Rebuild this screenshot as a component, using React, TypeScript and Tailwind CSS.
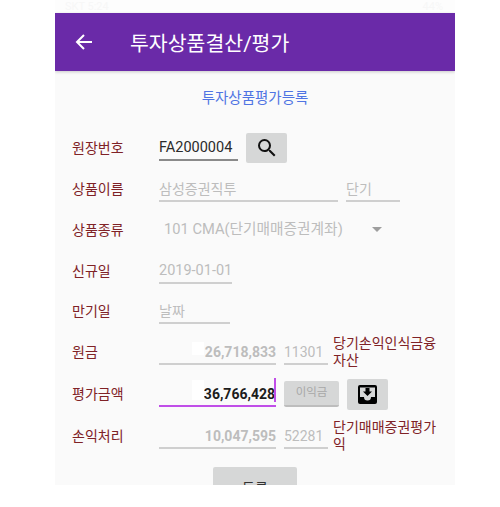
import React from 'react';

const FONT = 'font-["Roboto","Noto_Sans_CJK_KR",sans-serif]';

const Label = ({ children }: { children: React.ReactNode }) => (
  <span className="w-[87px] shrink-0 text-[14px] leading-[20px] text-[#7f2226]">{children}</span>
);

const Field = ({
  text,
  width,
  right,
  bold,
  patch,
  className,
}: {
  text: string;
  width: string;
  right?: boolean;
  bold?: boolean;
  patch?: boolean;
  className?: string;
}) => (
  <div
    className={`relative ${width} h-[26px] border-b-2 border-[#cfcfcf] text-[14px] leading-[20px] pt-[3px] text-[#bdbdbd] whitespace-nowrap ${
      right ? 'text-right' : ''
    } ${bold ? 'font-bold' : ''} ${className ?? ''}`}
  >
    {patch && <span className="absolute left-[33px] top-[3px] w-[12px] h-[13px] bg-white" />}
    {text}
  </div>
);

const SmallNote = ({ children }: { children: React.ReactNode }) => (
  <span className="ml-[5px] w-[108px] text-[14px] leading-[17px] text-[#7f2226] break-all">{children}</span>
);

const App = () => {
  return (
    <div className={`w-[500px] h-[507px] bg-white ${FONT}`}>
      <div className="ml-[55px] w-[400px] h-[485px] bg-[#fafafa] overflow-hidden flex flex-col">
        <div className="h-[13px] shrink-0 bg-[#fdfdfd] flex items-center justify-between pl-[10px] pr-[12px] text-[11px] leading-[13px] text-[#f7f7f7]">
          <span>SKT 5:24</span>
          <span>44%</span>
        </div>
        <header className="h-[58px] shrink-0 bg-[#6a2aa8] flex items-center pl-[20px] shadow-[0_1px_3px_rgba(0,0,0,0.2)]">
          <svg width="18" height="18" viewBox="0 0 18 18" fill="none" stroke="white" strokeWidth="2">
            <path d="M17 9H2M9 2L2 9l7 7" />
          </svg>
          <span className="ml-[37px] mt-[3px] text-[20.500px] leading-[28px] text-white">투자상품결산/평가</span>
        </header>
        <div className="mt-[18px] text-center text-[14.500px] leading-[20px] text-[#4f74e3]">투자상품평가등록</div>

        <div className="mt-[18px] pl-[17px] flex flex-col">
          <div className="h-[42px] flex items-center">
            <Label>원장번호</Label>
            <div className="w-[79px] h-[26px] border-b-2 border-[#8a8a8a] text-[14.500px] leading-[20px] pt-[3px] text-[#2b2b2b] whitespace-nowrap">
              FA2000004
            </div>
            <div className="ml-[8px] w-[41px] h-[30px] rounded-[2px] bg-[#d6d7d7] flex items-center justify-center">
              <svg width="24" height="24" viewBox="0 0 24 24" fill="#111">
                <path d="M15.5 14h-.79l-.28-.27A6.47 6.47 0 0 0 16 9.5 6.5 6.5 0 1 0 9.5 16c1.61 0 3.09-.59 4.23-1.57l.27.28v.79l5 4.99L20.49 19l-4.99-5zm-6 0C7.01 14 5 11.99 5 9.5S7.01 5 9.5 5 14 7.01 14 9.5 11.99 14 9.5 14z" />
              </svg>
            </div>
          </div>

          <div className="h-[40px] flex items-center">
            <Label>상품이름</Label>
            <Field text="삼성증권직투" width="w-[179px]" />
            <Field text="단기" width="w-[54px]" className="ml-[8px] -mt-[1px]" />
          </div>

          <div className="h-[41px] flex items-center">
            <Label>상품종류</Label>
            <span className="ml-[5px] w-[208px] text-[14.700px] text-[#bdbdbd] whitespace-nowrap">101 CMA(단기매매증권계좌)</span>
            <span className="w-0 h-0 border-x-[5px] border-x-transparent border-t-[5px] border-t-[#9e9e9e]" />
          </div>

          <div className="h-[41px] flex items-center">
            <Label>신규일</Label>
            <div className="w-[73px] h-[26px] border-b-2 border-[#cfcfcf] text-[14.500px] leading-[20px] pt-[3px] text-[#bdbdbd] whitespace-nowrap">
              2019-01-01
            </div>
          </div>

          <div className="h-[40px] flex items-center">
            <Label>만기일</Label>
            <Field text="날짜" width="w-[71px]" />
          </div>

          <div className="h-[42px] flex items-center">
            <Label>원금</Label>
            <Field text="26,718,833" width="w-[117px]" right bold patch />
            <Field text="11301" width="w-[44px]" className="ml-[8px]" />
            <SmallNote>당기손익인식금융자산</SmallNote>
          </div>

          <div className="h-[42px] flex items-center">
            <Label>평가금액</Label>
            <div className="relative w-[117px] h-[26px] border-b-2 border-[#c04ee8] text-[14px] leading-[20px] pt-[3px] text-right font-bold text-[#1c1c1c] pr-[1px] whitespace-nowrap">
              <span className="absolute left-[33px] top-[-1px] w-[12px] h-[20px] bg-white" />
              36,766,428
              <span className="absolute right-0 top-[-3px] w-[2px] h-[24px] bg-[#c04ee8]" />
            </div>
            <div className="ml-[8px] w-[55px] h-[26px] bg-[#d6d7d7] border-b-2 border-[#bdbdbd] rounded-[2px] flex items-center justify-center text-[11.500px] text-[#a8a8a8]">
              이익금
            </div>
            <div className="ml-[8px] w-[41px] h-[31px] rounded-[2px] bg-[#d6d7d7] flex items-center justify-center">
              <svg width="19" height="19" viewBox="0 0 19 19">
                <path d="M2 0h15a2 2 0 0 1 2 2v15a2 2 0 0 1-2 2H2a2 2 0 0 1-2-2V2a2 2 0 0 1 2-2z" fill="#000" />
                <path d="M2 2.500h15V12h-4a3.500 3.500 0 0 1-7 0H2z" fill="#d6d7d7" />
                <path d="M7.500 3h4v3.500h2.500L9.500 11 5 6.500h2.500z" fill="#000" />
              </svg>
            </div>
          </div>

          <div className="h-[42px] flex items-center">
            <Label>손익처리</Label>
            <Field text="10,047,595" width="w-[117px]" right bold />
            <Field text="52281" width="w-[44px]" className="ml-[8px]" />
            <SmallNote>단기매매증권평가익</SmallNote>
          </div>
        </div>

        <div className="mt-[10px] ml-[158px] w-[84px] h-[42px] shrink-0 rounded-[2px] bg-[#d6d7d7] flex items-center justify-center text-[14px] text-[#333]">
          등록
        </div>
      </div>
    </div>
  );
};

export default App;
